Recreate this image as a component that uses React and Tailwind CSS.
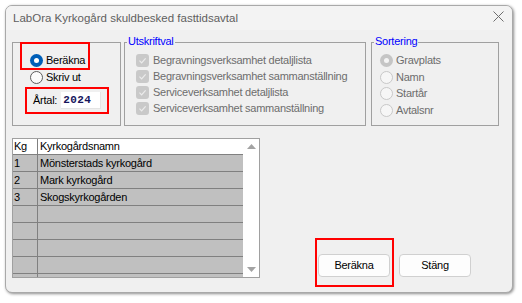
import React from 'react';

const font = "font-['Liberation_Sans',Arial,sans-serif]";

// Windows-style radio button
const Radio = ({ checked, disabled }) => {
  if (disabled) {
    return checked ? (
      <span className="w-[13px] h-[13px] rounded-full bg-[#c5c5c5] flex items-center justify-center shrink-0">
        <span className="w-[5px] h-[5px] rounded-full bg-[#f4f4f4]" />
      </span>
    ) : (
      <span className="w-[13px] h-[13px] rounded-full border border-[#c8c8c8] bg-[#f6f6f6] shrink-0" />
    );
  }
  return checked ? (
    <span className="w-[13px] h-[13px] rounded-full bg-[#005fb8] flex items-center justify-center shrink-0">
      <span className="w-[5px] h-[5px] rounded-full bg-white" />
    </span>
  ) : (
    <span className="w-[13px] h-[13px] rounded-full border border-[#5c5c5c] bg-[#fbfbfb] shrink-0" />
  );
};

const DisabledCheck = () => (
  <span className="w-[13px] h-[13px] rounded-[3px] bg-[#c9c9c9] flex items-center justify-center shrink-0">
    <svg width="9" height="9" viewBox="0 0 9 9" fill="none">
      <path d="M1.5 4.7 L3.6 6.8 L7.6 2.4" stroke="#ececec" strokeWidth="1.2" />
    </svg>
  </span>
);

const Legend = ({ children }) => (
  <span className="absolute left-[2px] -top-[9px] px-[1px] bg-[#f0f0f0] text-[#0000ff] leading-[14px]">
    {children}
  </span>
);

const rows = [
  ['1', 'Mönsterstads kyrkogård'],
  ['2', 'Mark kyrkogård'],
  ['3', 'Skogskyrkogården'],
  ['', ''],
  ['', ''],
  ['', ''],
  ['', ''],
  ['', ''],
];

const Grid = () => (
  <div className="w-[248px] h-[140px] border border-[#a0a0a0] flex overflow-hidden bg-white">
    <div className="w-[230px] flex flex-col text-black">
      <div className="flex h-[16px] shrink-0 border-b border-[#808080] bg-white leading-[15px]">
        <div className="w-[25px] border-r border-[#808080] pl-[1px]">Kg</div>
        <div className="flex-1 pl-[2px]">Kyrkogårdsnamn</div>
      </div>
      {rows.map((r, i) => (
        <div key={i} className="flex h-[17px] shrink-0 border-b border-[#808080] bg-[#c0c0c0] leading-[16px]">
          <div className="w-[25px] border-r border-[#808080] pl-[1px]">{r[0]}</div>
          <div className="flex-1 pl-[2px]">{r[1]}</div>
        </div>
      ))}
    </div>
    <div className="w-[16px] flex flex-col justify-between items-center pt-[5px] pb-[5px] bg-white">
      <svg width="9" height="5" viewBox="0 0 9 5"><path d="M0 5 L4.5 0 L9 5 Z" fill="#a3a3a3" /></svg>
      <svg width="9" height="5" viewBox="0 0 9 5"><path d="M0 0 L4.5 5 L9 0 Z" fill="#a3a3a3" /></svg>
    </div>
  </div>
);

const Button = ({ children }) => (
  <button className="w-[72px] h-[23px] rounded-[4px] border border-[#d0d0d0] bg-[#fdfdfd] text-black leading-[21px] text-center">
    {children}
  </button>
);

export default function App() {
  return (
    <div className={`w-[522px] h-[303px] bg-white pt-[5px] pl-[5px] ${font} text-[11px] tracking-[-0.25px]`}>
      <div className="w-[508px] h-[288px] border border-[#a9a9a9] rounded-[7px] bg-[#f0f0f0] overflow-hidden flex flex-col shadow-[1px_1px_3px_rgba(0,0,0,0.45)]">
        {/* Title bar */}
        <div className="h-[24px] shrink-0 flex items-start justify-between pl-[7px] pr-[8px] bg-[#f3f3f3]">
          <span className="text-[11.5px] tracking-normal text-[#5f5f5f] leading-[24px]">
            LabOra Kyrkogård skuldbesked fasttidsavtal
          </span>
          <svg className="mt-[5px]" width="11" height="11" viewBox="0 0 11 11">
            <path d="M0.5 0.5 L10.5 10.5 M10.5 0.5 L0.5 10.5" stroke="#6e6e6e" strokeWidth="1" />
          </svg>
        </div>

        {/* Body */}
        <div className="flex flex-col pt-[12px] pl-[6px]">
          <div className="flex items-start">
            {/* Mode */}
            <div className="w-[109px] h-[84px] border border-[#a0a0a0] flex flex-col">
              <div className="-mt-px ml-[7px] w-[70px] h-[28px] border-2 border-[#ff0000] pl-[8px] pt-[10px]">
                <label className="flex items-center gap-[3px] h-[13px] leading-[13px] text-black">
                  <Radio checked />
                  Beräkna
                </label>
              </div>
              <label className="mt-px ml-[17px] flex items-center gap-[3px] h-[13px] leading-[13px] text-black">
                <Radio />
                Skriv ut
              </label>
              <div className="mt-[3px] ml-[12px] w-[84px] h-[27px] border-2 border-[#ff0000] pl-[6px] flex items-center gap-[4px]">
                <span className="text-black">Årtal:</span>
                <span className="w-[40px] h-[17px] bg-white border-r border-b border-[#e4e4e4] pl-[2px] leading-[17px] font-['Liberation_Mono',monospace] font-bold text-[11px] tracking-[0.4px] text-[#15155c]">
                  2024
                </span>
              </div>
            </div>

            {/* Utskriftval */}
            <div className="relative ml-[3px] w-[242px] h-[84px] border border-[#a0a0a0] pt-[11px] pl-[11px] flex flex-col gap-[3px]">
              <Legend>Utskriftval</Legend>
              {[
                'Begravningsverksamhet detaljlista',
                'Begravningsverksamhet sammanställning',
                'Serviceverksamhet detaljlista',
                'Serviceverksamhet sammanställning',
              ].map((t) => (
                <div key={t} className="flex items-center gap-[4px] h-[13px] leading-[13px] text-[#6d6d6d]">
                  <DisabledCheck />
                  {t}
                </div>
              ))}
            </div>

            {/* Sortering */}
            <div className="relative ml-[5px] w-[128px] h-[84px] border border-[#a0a0a0] pt-[11px] pl-[8px] flex flex-col">
              <Legend>Sortering</Legend>
              {['Gravplats', 'Namn', 'Startår', 'Avtalsnr'].map((t, i) => (
                <div
                  key={t}
                  className={`flex items-center gap-[3px] h-[13px] leading-[13px] text-[#6d6d6d] ${i === 1 || i === 3 ? 'mt-[4px]' : i === 2 ? 'mt-[3px]' : ''}`}
                >
                  <Radio disabled checked={i === 0} />
                  {t}
                </div>
              ))}
            </div>
          </div>

          {/* Bottom */}
          <div className="flex items-start mt-[12px]">
            <Grid />
            <div className="ml-[55px] mt-[100px] flex items-start">
              <div className="border-2 border-[#ff0000] pt-[14px] pl-[1px] pr-[2px] pb-[8px]">
                <Button>Beräkna</Button>
              </div>
              <div className="ml-[5px] mt-[16px]">
                <Button>Stäng</Button>
              </div>
            </div>
          </div>
        </div>
      </div>
    </div>
  );
}
